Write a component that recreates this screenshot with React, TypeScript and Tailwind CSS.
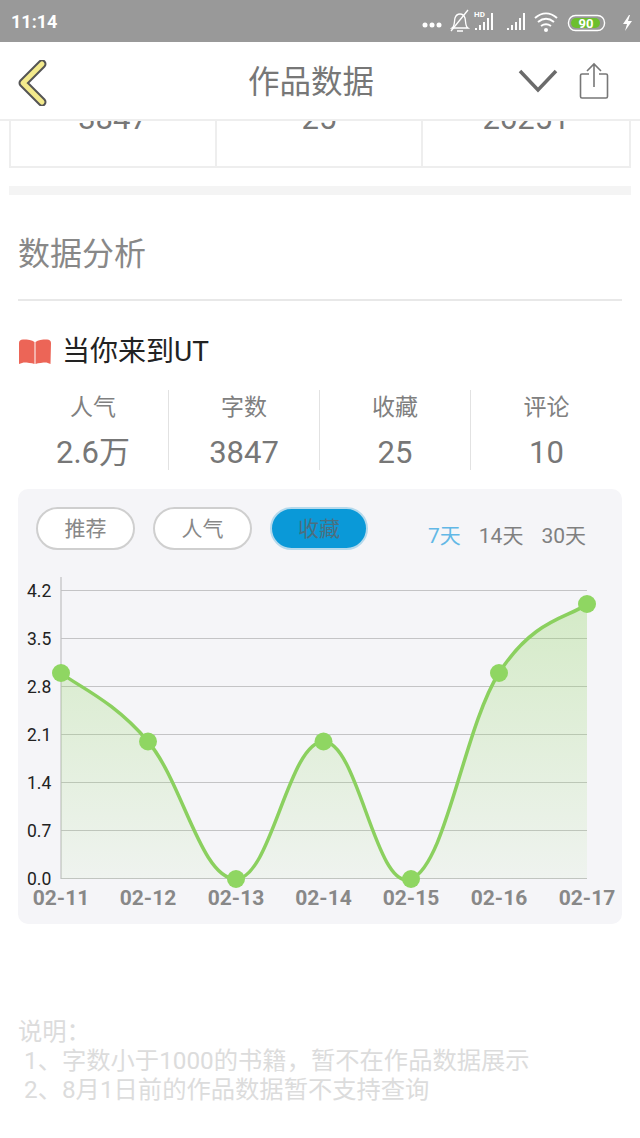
const FONT = "font-['Roboto','Noto_Sans_CJK_SC',sans-serif]";

const points: Array<[number, number]> = [
  [43, 184],
  [130, 252.5],
  [218, 390],
  [305.5, 252.5],
  [393, 390],
  [481, 184],
  [569, 115],
];
const xLabels = ['02-11', '02-12', '02-13', '02-14', '02-15', '02-16', '02-17'];
const yLabels = ['4.2', '3.5', '2.8', '2.1', '1.4', '0.7', '0.0'];
const stats = [
  { label: '人气', value: '2.6万' },
  { label: '字数', value: '3847' },
  { label: '收藏', value: '25' },
  { label: '评论', value: '10' },
];

// same shape as the chart lib's cubic mode, intensity 0.2
function buildCurve(pts: Array<[number, number]>) {
  let d = `M${pts[0][0]} ${pts[0][1]}`;
  for (let i = 0; i < pts.length - 1; i++) {
    const prev = pts[Math.max(i - 1, 0)];
    const cur = pts[i];
    const next = pts[i + 1];
    const after = pts[Math.min(i + 2, pts.length - 1)];
    const c1x = cur[0] + 0.2 * (next[0] - prev[0]);
    const c1y = cur[1] + 0.2 * (next[1] - prev[1]);
    const c2x = next[0] - 0.2 * (after[0] - cur[0]);
    const c2y = next[1] - 0.2 * (after[1] - cur[1]);
    d += ` C${c1x} ${c1y} ${c2x} ${c2y} ${next[0]} ${next[1]}`;
  }
  return d;
}

function StatusBar() {
  return (
    <div className="flex h-[42px] items-center justify-between bg-[#999999] pl-[11px] pr-[6px] text-white">
      <span className="pt-[2px] text-[18px] font-bold leading-none">11:14</span>
      <div className="flex items-center">
        <svg width="212" height="28" viewBox="0 0 212 28" fill="none" className="block">
          {/* dots */}
          <circle cx="3" cy="18" r="2.5" fill="#fff" />
          <circle cx="10" cy="18" r="2.5" fill="#fff" />
          <circle cx="17" cy="18" r="2.5" fill="#fff" />
          {/* muted bell */}
          <path d="M30 21c3-2 2-6 3-10 1-3 3-4 5-4s4 1 5 4c1 4 0 8 3 10z M35 24h6" stroke="#fff" strokeWidth="1.3" />
          <path d="M29 24L46 3" stroke="#fff" strokeWidth="1.3" />
          {/* HD signal */}
          <text x="52" y="10" fill="#fff" fontSize="8" fontWeight="700">HD</text>
          <path d="M54 23v-2M58 23v-5M62 23v-8M66 23v-12M70 23v-17" stroke="#fff" strokeWidth="2" />
          {/* signal */}
          <path d="M86 23v-2M90 23v-5M94 23v-8M98 23v-12M102 23v-17" stroke="#fff" strokeWidth="2" />
          {/* wifi */}
          <path d="M113 11c7-6 15-6 22 0M116 15c5-4 11-4 16 0M119 19c3-2 7-2 10 0" stroke="#fff" strokeWidth="2" />
          <circle cx="124" cy="23" r="2" fill="#fff" />
          {/* battery */}
          <rect x="146.500" y="8.500" width="36" height="15" rx="7" stroke="#fff" strokeWidth="1.4" />
          <rect x="149" y="11" width="29" height="10" rx="5" fill="#6cbf2e" />
          <text x="164" y="21" fill="#fff" fontSize="13" fontWeight="700" textAnchor="middle">90</text>
          {/* bolt */}
          <path d="M207 8l-6 9h4l-2 7 7-10h-4l2-6z" fill="#fff" />
        </svg>
      </div>
    </div>
  );
}

function Header() {
  return (
    <div className="relative z-10 flex h-[79px] items-center border-b-2 border-[#eeeeee] bg-white pl-[18px] pr-[31px] pt-[4px]">
      <svg width="30" height="46" viewBox="0 0 30 46" fill="none" className="block">
        <path d="M24 4L5 23l19 19" stroke="#555555" strokeWidth="9" strokeLinecap="round" strokeLinejoin="round" />
        <path d="M24 4L5 23l19 19" stroke="#f3ea8c" strokeWidth="5" strokeLinecap="round" strokeLinejoin="round" />
      </svg>
      <span className="ml-[200px] text-[31.5px] leading-none text-[#777777]">作品数据</span>
      <div className="ml-auto flex items-center gap-[21px]">
        <svg width="40" height="26" viewBox="0 0 40 26" fill="none" className="-mt-[4px] block">
          <path d="M2 3l18 19L38 3" stroke="#6b6b6b" strokeWidth="3.500" />
        </svg>
        <svg width="30" height="38" viewBox="0 0 30 38" fill="none" className="-mt-[3px] block">
          <path d="M10 12H3a1.500 1.500 0 0 0-1.500 1.500v21A1.500 1.500 0 0 0 3 36h24a1.500 1.500 0 0 0 1.500-1.500v-21A1.500 1.500 0 0 0 27 12h-7" stroke="#777777" strokeWidth="1.600" />
          <path d="M15 25V2M8 9l7-7 7 7" stroke="#777777" strokeWidth="1.600" />
        </svg>
      </div>
    </div>
  );
}

function Chart() {
  const curve = buildCurve(points);
  const area = `${curve} L569 390 L43 390 Z`;
  return (
    <svg width="604" height="345" viewBox="0 86 604 345" className="mt-[25px] block" fill="none">
      <defs>
        <linearGradient id="areaFill" x1="0" y1="115" x2="0" y2="390" gradientUnits="userSpaceOnUse">
          <stop offset="0" stopColor="#8fd460" stopOpacity="0.32" />
          <stop offset="1" stopColor="#8fd460" stopOpacity="0.06" />
        </linearGradient>
      </defs>
      {yLabels.map((label, i) => (
        <g key={label}>
          <path d={`M43 ${101.5 + i * 48}H569`} stroke="#c4c4c6" strokeWidth="1.2" />
          <text x="9" y={107.5 + i * 48} fontSize="17.5" fill="#222222">{label}</text>
        </g>
      ))}
      <path d="M43 88V390" stroke="#c0c0c2" strokeWidth="1.2" />
      <path d={area} fill="url(#areaFill)" />
      <path d={curve} stroke="#8bd05f" strokeWidth="3.5" />
      {points.map(([x, y]) => (
        <circle key={x} cx={x} cy={y} r="9" fill="#8fd662" />
      ))}
      {xLabels.map((label, i) => (
        <text key={label} x={points[i][0]} y="416" fontSize="21" fontWeight="700" fill="#888888" textAnchor="middle">{label}</text>
      ))}
    </svg>
  );
}

export default function App() {
  return (
    <div className={`${FONT} h-[1138px] w-[640px] overflow-hidden bg-white`}>
      <StatusBar />
      <Header />

      {/* table scrolled under the header */}
      <div className="mx-[9px] grid h-[47px] grid-cols-3 overflow-hidden border-x-2 border-b-2 border-[#eeeeee] text-center text-[31px] leading-none text-[#777777]">
        <div className="-mt-[18px] h-[70px] border-r-2 border-[#eeeeee]">3847</div>
        <div className="-mt-[18px] h-[70px] border-r-2 border-[#eeeeee]">25</div>
        <div className="-mt-[18px] h-[70px]">26251</div>
      </div>
      <div className="mx-[9px] mt-[18px] h-[9px] bg-[#f4f4f4]" />

      <div className="mx-[18px]">
        <div className="flex h-[106px] items-center border-b-2 border-[#e8e8e8] pt-[14px] text-[32px] leading-none text-[#888888]">数据分析</div>

        <div className="mt-[37px] flex items-center gap-[10px]">
          <svg width="34" height="26" viewBox="0 0 34 26" className="block">
            <path d="M1 4c0-2 1.500-3.500 4-3.500 5 0 9 .5 11.500 2.500V25c-3-1-7-1.500-11-1.500L1 25z" fill="#ec6557" />
            <path d="M33 4c0-2-1.500-3.500-4-3.500-5 0-9 .5-11.500 2.500V25c3-1 7-1.500 11-1.500l4 1.500z" fill="#ec6557" />
          </svg>
          <span className="text-[28px] leading-none text-[#222222]">当你来到UT</span>
        </div>

        <div className="mt-[24px] grid grid-cols-4">
          {stats.map((s, i) => (
            <div key={s.label} className={`flex h-[80px] flex-col items-center pt-[6px] ${i < 3 ? 'border-r border-[#e2e2e2]' : ''}`}>
              <span className="text-[23px] leading-[24px] text-[#808080]">{s.label}</span>
              <span className="mt-[17px] text-[31px] leading-[32px] text-[#777777]">{s.value}</span>
            </div>
          ))}
        </div>

        <div className="mt-[19px] h-[435px] rounded-[10px] bg-[#f5f5f8]">
          <div className="flex items-start pl-[18px] pr-[36px] pt-[18px]">
            <div className="flex gap-[18px]">
              <div className="flex h-[43px] w-[99px] items-center justify-center rounded-full border-2 border-[#cfcfcf] bg-white pt-[2px] text-[21px] text-[#888888]">推荐</div>
              <div className="flex h-[43px] w-[99px] items-center justify-center rounded-full border-2 border-[#cfcfcf] bg-white pt-[2px] text-[21px] text-[#888888]">人气</div>
              <div className="flex h-[43px] w-[98px] items-center justify-center rounded-full border-2 border-[#b4d9ec] bg-[#0a99d8] pt-[2px] text-[21px] text-[#4a6f80]">收藏</div>
            </div>
            <div className="ml-auto flex gap-[18px] pt-[15px] text-[21px] leading-[28px] text-[#808080]">
              <span className="text-[#62b8e6]">7天</span>
              <span>14天</span>
              <span>30天</span>
            </div>
          </div>
          <Chart />
        </div>

        <div className="mt-[93px] text-[24.3px] leading-[29px] text-[#dcdcdc]">
          <div>说明：</div>
          <div className="pl-[6px]">1、字数小于1000的书籍，暂不在作品数据展示</div>
          <div className="pl-[6px]">2、8月1日前的作品数据暂不支持查询</div>
        </div>
      </div>
    </div>
  );
}
